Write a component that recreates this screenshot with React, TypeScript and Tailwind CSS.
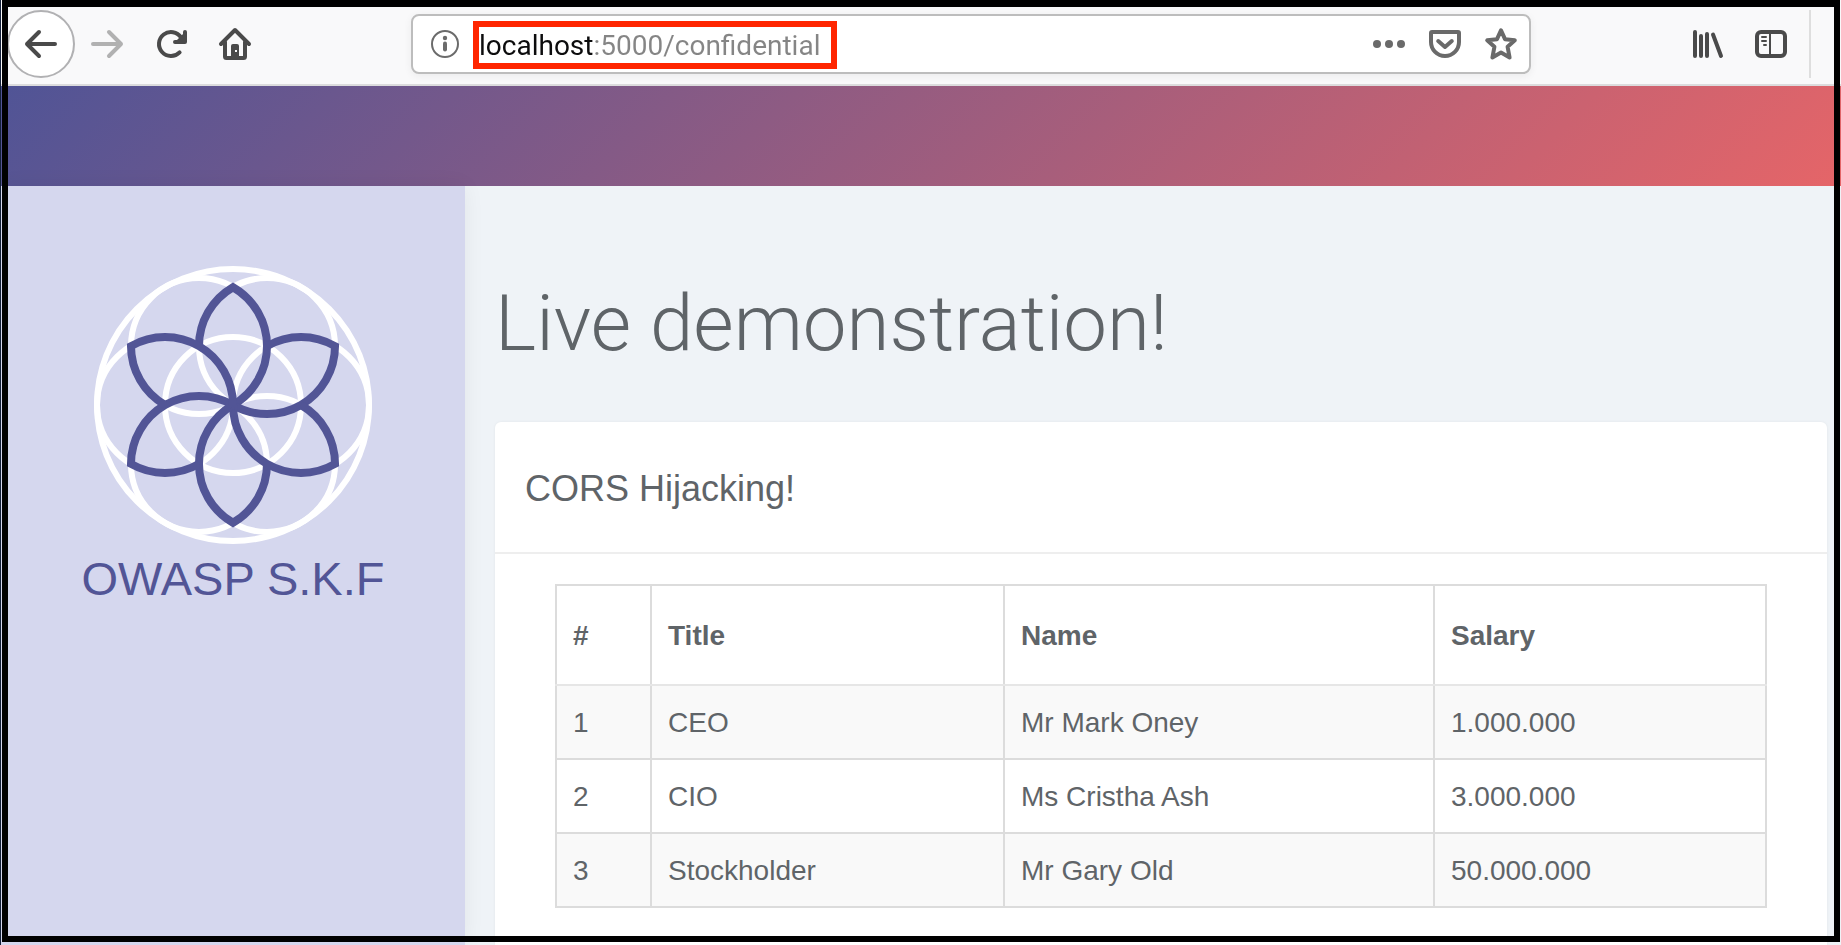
import type { ReactNode } from "react";

const petalAngles = [0, 60, 120, 180, 240, 300];

const ringCenters = [
  [68, 0],
  [34, 58.9],
  [-34, 58.9],
  [-68, 0],
  [-34, -58.9],
  [34, -58.9],
  [0, 0],
];

const employees = [
  { id: 1, title: "CEO", name: "Mr Mark Oney", salary: "1.000.000" },
  { id: 2, title: "CIO", name: "Ms Cristha Ash", salary: "3.000.000" },
  { id: 3, title: "Stockholder", name: "Mr Gary Old", salary: "50.000.000" },
];

function Icon({ children }: { children: ReactNode }) {
  return (
    <svg
      viewBox="0 0 32 32"
      className="size-8 overflow-visible"
      fill="none"
      stroke="currentColor"
      strokeWidth="4"
      strokeLinecap="round"
      strokeLinejoin="round"
      aria-hidden="true"
    >
      {children}
    </svg>
  );
}

function ToolButton({ label, className = "w-16 text-[#4a4a4a]", children }: { label: string; className?: string; children: ReactNode }) {
  return (
    <button type="button" aria-label={label} className={`flex h-14 shrink-0 items-center justify-center ${className}`}>
      <Icon>{children}</Icon>
    </button>
  );
}

function Toolbar() {
  return (
    <div className="flex h-[86px] items-center border-b-2 border-[#dcdcdd] bg-[#f9f9fa] pt-1 pl-1.5">
      <button
        type="button"
        aria-label="Back"
        className="flex size-[68px] shrink-0 items-center justify-center rounded-full border-2 border-[#b1b1b3] bg-white text-[#4a4a4a]"
      >
        <Icon>
          <path d="M14 4L2 16L14 28M2 16H30" />
        </Icon>
      </button>
      <ToolButton label="Forward" className="w-16 text-[#b1b1b1]">
        <path d="M18 4L30 16L18 28M30 16H2" />
      </ToolButton>
      <ToolButton label="Reload">
        <path d="M24.6 24.4A12 12 0 1 1 26 9.4" />
        <path d="M30 4V14H20Z" fill="currentColor" stroke="none" />
        <path d="M30 4V14H20M26 9.4L29 13" />
      </ToolButton>
      <ToolButton label="Home">
        <path d="M2 16L16 2L30 16" />
        <path d="M6 14V28.500Q6 30 7.500 30H24.500Q26 30 26 28.500V14" />
        <path d="M12 30V18Q12 16 14 16H18Q20 16 20 18V30Z" fill="currentColor" stroke="none" />
        <rect x="16" y="22" width="2" height="2" fill="#f9f9fa" stroke="none" />
      </ToolButton>

      <div className="ml-36 flex h-[60px] min-w-0 flex-1 items-center rounded-lg border-2 border-[#bdbdbd] bg-white pl-[18px] shadow-[0_2px_8px_rgba(0,0,0,0.06)]">
        <button type="button" aria-label="Site information" className="mr-3.5 flex w-7 shrink-0 justify-center text-[#6b6b6b]">
          <Icon>
            <circle cx="16" cy="16" r="13" strokeWidth="2" />
            <path d="M16 15.500V21.500" />
            <circle cx="16" cy="10" r="2.200" fill="currentColor" stroke="none" />
          </Icon>
        </button>
        <div className="mt-0.5 h-12 w-[364px] shrink-0 border-6 border-[#ff2600]">
          <input
            type="text"
            aria-label="Address"
            defaultValue="localhost:5000/confidential"
            className="block h-full w-full bg-[linear-gradient(to_right,#0c0c0d_114px,#858585_114px)] bg-clip-text font-[Roboto,sans-serif] text-[28px] text-transparent caret-black outline-none"
          />
        </div>
        <div className="ml-auto flex">
          <ToolButton label="Page actions" className="w-14 text-[#6a6a6a]">
            <g fill="currentColor" stroke="none">
              <circle cx="4" cy="16" r="4" />
              <circle cx="16" cy="16" r="4" />
              <circle cx="28" cy="16" r="4" />
            </g>
          </ToolButton>
          <ToolButton label="Save to Pocket" className="w-14 text-[#6a6a6a]">
            <path d="M3 4H29Q30 4 30 5V14A14 14 0 0 1 2 14V5Q2 4 3 4Z" />
            <path d="M9.200 13L16 19L22.800 13" />
          </ToolButton>
          <ToolButton label="Bookmark this page" className="w-14 text-[#6a6a6a]">
            <path d="M16 2.400L20 11.200L29.800 12.300L22.600 18.800L24.600 29.500L16 24.600L7.400 29.500L9.400 18.800L2.200 12.300L12 11.200Z" />
          </ToolButton>
        </div>
      </div>

      <div className="ml-36 flex shrink-0 items-center">
        <ToolButton label="Library">
          <path d="M4 4V28M10 8V28M16 6V28M22 6.500L30 28" />
        </ToolButton>
        <ToolButton label="Sidebars">
          <rect x="2" y="4" width="28" height="24" rx="4" />
          <path d="M15 4V28M7 9H11M7 13H11M9 17H11" strokeWidth="2" />
        </ToolButton>
        <div className="mr-[30px] ml-1.5 h-[68px] w-0.5 bg-[#dedede]" />
      </div>
    </div>
  );
}

function Logo() {
  return (
    <svg viewBox="-140 -140 280 280" className="size-[280px]" fill="none" role="img" aria-label="OWASP S.K.F">
      <g stroke="#ffffff" strokeWidth="6">
        <circle r="136" />
        {ringCenters.map(([cx, cy]) => (
          <circle key={`${cx},${cy}`} cx={cx} cy={cy} r="68" />
        ))}
      </g>
      <g stroke="#525596" strokeWidth="8" strokeMiterlimit="10">
        {petalAngles.map((angle) => (
          <path key={angle} d="M-34 -58.900A68 68 0 0 1 0 -117.800A68 68 0 0 1 0 0" transform={`rotate(${angle})`} />
        ))}
      </g>
    </svg>
  );
}

export default function App() {
  const headCell = "border-2 border-[#dcdcdc] border-b-[#e6e6e6] px-4 pt-0.5 text-left font-bold";
  const cell = "border-2 border-[#dcdcdc] px-4 pt-0.5";

  return (
    <div className="relative flex min-h-screen flex-col bg-[#14203a] pl-px font-['Liberation_Sans',Arial,sans-serif] text-[#5f6468]">
      <Toolbar />
      <header className="h-[100px] bg-[linear-gradient(135deg,#505496,#e56568)]" />
      <div className="flex flex-1 bg-[#eff3f7]">
        <aside className="z-10 flex w-[464px] shrink-0 flex-col items-center bg-[#d5d7ee] pt-[79px] shadow-[0_0_20px_rgba(0,0,0,0.06)]">
          <Logo />
          <p className="mt-1.5 text-[47px] leading-[56px] text-[#525596]">OWASP S.K.F</p>
        </aside>
        <main className="flex min-w-0 flex-1 flex-col pr-3.5 pl-[30px]">
          <h1 className="mt-[90px] mb-[50px] font-[Roboto,sans-serif] text-[78px] leading-[96px] font-light">Live demonstration!</h1>
          <section className="flex-1 rounded-t-md bg-white shadow-[0_0_3px_rgba(0,0,0,0.06)]">
            <h2 className="border-b-2 border-[#eeeeee] px-[30px] pt-[42px] pb-[38px] text-4xl leading-[50px]">CORS Hijacking!</h2>
            <div className="px-[60px] pt-[30px] pb-9">
              <table className="w-full table-fixed border-collapse text-[28px] leading-10">
                <colgroup>
                  <col className="w-[95px]" />
                  <col className="w-[353px]" />
                  <col className="w-[430px]" />
                  <col />
                </colgroup>
                <thead>
                  <tr className="h-[100px]">
                    <th className={headCell}>#</th>
                    <th className={headCell}>Title</th>
                    <th className={headCell}>Name</th>
                    <th className={headCell}>Salary</th>
                  </tr>
                </thead>
                <tbody>
                  {employees.map((person) => (
                    <tr key={person.id} className="h-[74px] odd:bg-[#f9f9f9]">
                      <td className={cell}>{person.id}</td>
                      <td className={cell}>{person.title}</td>
                      <td className={cell}>{person.name}</td>
                      <td className={cell}>{person.salary}</td>
                    </tr>
                  ))}
                </tbody>
              </table>
            </div>
          </section>
        </main>
      </div>
      <div className="pointer-events-none absolute top-0 right-px bottom-[3px] left-0.5 z-20 border-6 border-t-7 border-black" />
    </div>
  );
}
